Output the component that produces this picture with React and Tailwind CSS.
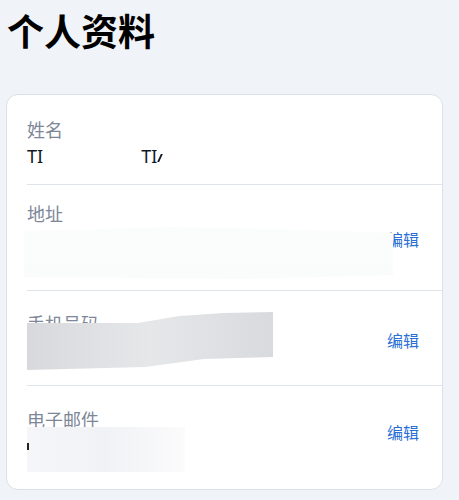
export default function App() {
  const font = { fontFamily: '"Noto Sans", "Noto Sans CJK SC", sans-serif' };

  return (
    <div className="min-h-screen bg-[#f0f3f7]" style={font}>
      <h1 className="pl-[7px] pt-[10px] text-[37px] leading-[44px] font-bold text-black">个人资料</h1>

      <div className="mt-[40px] ml-[6px] mr-[16px] overflow-hidden rounded-[12px] border border-[#dbe1e8] bg-white">
        {/* 姓名 */}
        <div className="ml-5 h-[90px] border-b border-[#dfe4ea] pt-[22px]">
          <div className="text-[18px] leading-[26px] text-[#7d8798]">姓名</div>
          <div className="flex items-center text-[18px] leading-[26px] text-[#111827]">
            <span>TI</span>
            <span className="inline-block w-[98px]" />
            <span>TI</span>
            <span className="ml-[2px] mt-[4px] inline-block h-[8px] w-[2px] skew-x-[-25deg] bg-[#111827]" />
          </div>
        </div>

        {/* 地址 */}
        <div className="ml-5 h-[106px] border-b border-[#dfe4ea] pt-[16px]">
          <div className="flex items-center justify-between pr-[23px]">
            <div>
              <div className="text-[18px] leading-[26px] text-[#7d8798]">地址</div>
              <div className="relative z-10 -ml-[3px] -mr-[8px] h-[52px] w-[369px] bg-gradient-to-b from-[#fbfcfc] to-[#fafbfb] [clip-path:polygon(0_4px,40%_0,70%_2px,100%_6px,100%_48px,60%_52px,0_50px)]" />
            </div>
            <button className="text-[16px] leading-[22px] text-[#2b6fd4]">编辑</button>
          </div>
        </div>

        {/* 手机号码 */}
        <div className="ml-5 h-[95px] border-b border-[#dfe4ea] pt-[20px]">
          <div className="flex items-center justify-between pr-[23px]">
            <div>
              <div className="text-[18px] leading-[26px] text-[#7d8798]">手机号码</div>
              <div className="relative -mt-[25px] h-[58px] w-[246px] bg-gradient-to-r from-[#d8d9dc] via-[#e6e7e9] to-[#d9dadd] [clip-path:polygon(0_11px,45%_11px,62%_4px,80%_1px,100%_0,100%_45px,72%_47px,48%_55px,0_58px)]" />
            </div>
            <button className="text-[16px] leading-[22px] text-[#2b6fd4]">编辑</button>
          </div>
        </div>

        {/* 电子邮件 */}
        <div className="ml-5 h-[103px] pt-[21px]">
          <div className="flex items-center justify-between pr-[23px]">
            <div>
              <div className="text-[18px] leading-[26px] text-[#7d8798]">电子邮件</div>
              <div className="relative -mt-[6px] -mb-[13px] h-[45px] w-[158px] bg-gradient-to-r from-[#f5f6f8] via-[#f1f2f5] to-[#fbfbfc]">
                <span className="absolute left-0 top-[16px] h-[7px] w-[2px] bg-[#222]" />
              </div>
            </div>
            <button className="text-[16px] leading-[22px] text-[#2b6fd4]">编辑</button>
          </div>
        </div>
      </div>
    </div>
  );
}
